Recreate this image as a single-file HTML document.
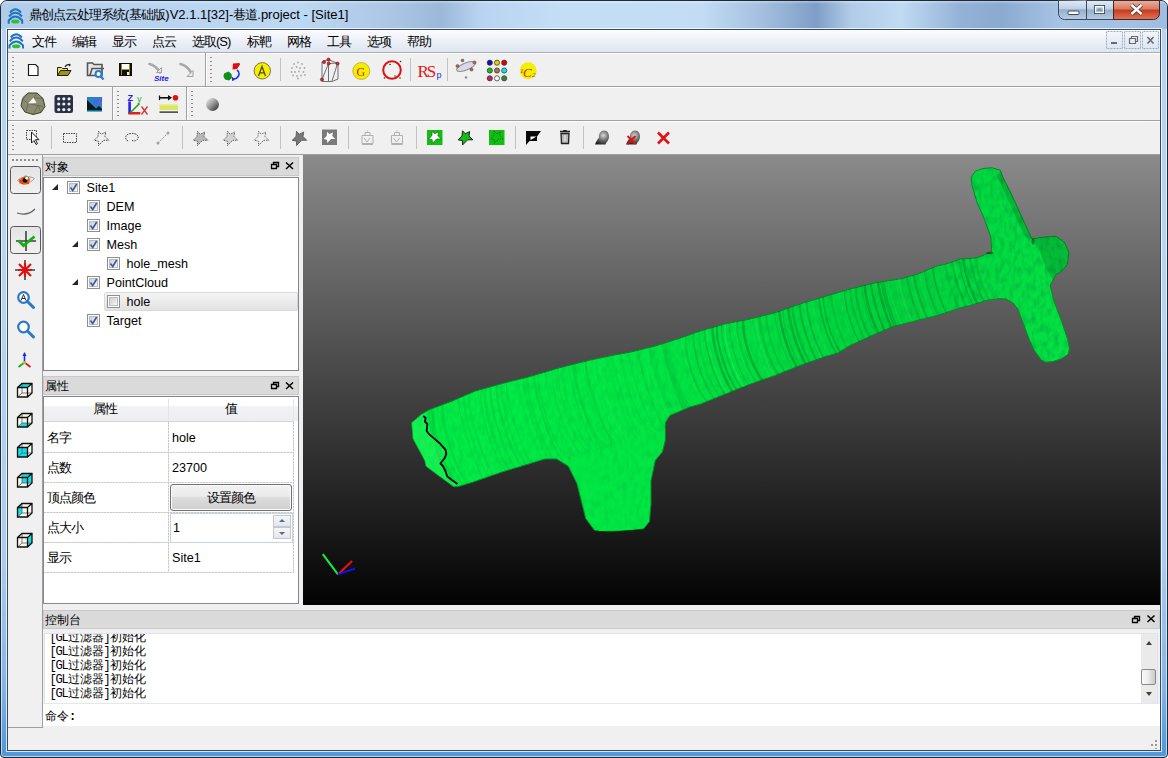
<!DOCTYPE html>
<html><head><meta charset="utf-8">
<style>
*{margin:0;padding:0;box-sizing:border-box}
html,body{width:1168px;height:758px;overflow:hidden}
body{position:relative;font-family:"Liberation Sans",sans-serif;font-size:12px;color:#000;background:#fff}
.a{position:absolute}
#frame{left:0;top:0;width:1168px;height:758px;border:1px solid #1c2a3a;border-radius:7px 7px 4px 4px;box-shadow:inset 0 0 0 1px rgba(255,255,255,.6);
 background:linear-gradient(180deg,#a9c8e8 0px,#b6d3f0 28px,#b9d5f0 250px,#acccec 560px,#80b4e4 690px,#5a9cdc 740px,#5096d8 758px);}
#frame:after{content:"";position:absolute;left:0;top:0;right:0;height:28px;border-radius:7px 7px 0 0;background:linear-gradient(180deg,rgba(255,255,255,.35) 0,rgba(255,255,255,0) 3px,rgba(255,255,255,0) 100%),linear-gradient(90deg,#b0cce8 0px,#b8d4f0 150px,#bcd8f2 300px,#a8c4e2 400px,#9cb8d8 440px,#b8d4f0 480px,#c4def6 560px,#c2dcf4 700px,#a4c0de 760px,#7e9ec6 815px,#b0cce8 850px,#c0daf2 900px,#94b2d6 960px,#8aaad0 1000px,#a8c4e4 1060px,#a0bce0 1168px)}
#client{left:7px;top:29px;width:1154px;height:722px;border:1px solid #3a4a5e;background:#f0f0f0;z-index:1;box-shadow:0 0 0 1px rgba(255,255,255,.75)}
.title{left:29px;top:6px;font-size:13px;color:#000;white-space:nowrap;z-index:2}
.cap{top:1px;height:19px;border:1px solid #4a5a6a;z-index:2}
#menubar{left:8px;top:30px;width:1152px;height:23px;background:linear-gradient(180deg,#fbfcfe 0%,#eef1f8 45%,#dfe5f0 100%);border-bottom:1px solid #a8aeb8;z-index:2}
.mi{top:33px;font-size:13px;letter-spacing:-1px;font-weight:500;z-index:3;white-space:nowrap}
.hl{height:1px;background:#a0a0a0;z-index:2}
.hlw{height:1px;background:#fff;z-index:2}
.vl{width:1px;background:#a0a0a0;z-index:2}
.vlw{width:1px;background:#fff;z-index:2}
.grip{width:2px;z-index:3;background:repeating-linear-gradient(180deg,#8a8a8a 0 1px,transparent 1px 4px)}
.grph{height:2px;z-index:3;background:repeating-linear-gradient(90deg,#8a8a8a 0 2px,transparent 2px 5px)}
.ic{z-index:4;overflow:visible}
.panelt{height:19px;background:#dadada;border:1px solid #c8c8c8;z-index:3}
.pt{font-size:12px;font-weight:500;z-index:4;white-space:nowrap}
.white{background:#fff;z-index:3}
.tx{z-index:5;white-space:nowrap;font-size:12.6px}
.cb{width:13px;height:13px;border:1px solid #8f8f8f;background:linear-gradient(135deg,#dcdcdc,#fafafa);z-index:5}
.tri{width:0;height:0;z-index:5;border-style:solid}
#vp{left:303px;top:155px;width:857px;height:450px;background:linear-gradient(180deg,#8a8a8a 0%,#030303 100%);z-index:3;overflow:hidden}
.c12{letter-spacing:-1px;font-weight:500}
.cj{font-size:13px;letter-spacing:-1px;line-height:14px;font-weight:500}
.ln{height:14px;line-height:14px;white-space:nowrap;font-size:12px;font-weight:500;font-family:"Liberation Sans",sans-serif}
.m{font-family:"Liberation Mono",monospace;font-size:12px;letter-spacing:-1.2px}
.cjm{font-size:12px;font-weight:500}
.log{left:51px;font-size:12px;z-index:6;white-space:nowrap;line-height:14px}
</style></head><body>
<div id="frame" class="a"></div>
<div class="a title"><span class="c12">鼎创点云处理系统</span>(<span class="c12">基础版</span>)V2.1.1[32]-<span class="c12">巷道</span>.project - [Site1]</div>
<div id="client" class="a"></div>
<div id="menubar" class="a"></div>
<div class="a mi" style="left:32px">文件</div>
<div class="a mi" style="left:72px">编辑</div>
<div class="a mi" style="left:112px">显示</div>
<div class="a mi" style="left:152px">点云</div>
<div class="a mi" style="left:192px">选取(S)</div>
<div class="a mi" style="left:247px">标靶</div>
<div class="a mi" style="left:287px">网格</div>
<div class="a mi" style="left:327px">工具</div>
<div class="a mi" style="left:367px">选项</div>
<div class="a mi" style="left:407px">帮助</div>

<!-- toolbar row lines -->
<div class="a hlw" style="left:8px;top:53px;width:1152px"></div>
<div class="a hl" style="left:8px;top:86px;width:1152px"></div>
<div class="a hlw" style="left:8px;top:87px;width:1152px"></div>
<div class="a hl" style="left:8px;top:120px;width:1152px"></div>
<div class="a hlw" style="left:8px;top:121px;width:1152px"></div>
<div class="a hl" style="left:8px;top:154px;width:1152px"></div>

<!-- viewport -->
<div id="vp" class="a"></div>


<svg class="a" style="left:303px;top:155px;z-index:4" width="857" height="450" viewBox="303 155 857 450">
<defs>
<linearGradient id="tg" gradientUnits="userSpaceOnUse" x1="420" y1="0" x2="1070" y2="0"><stop offset="0" stop-color="#02ec46"/><stop offset=".35" stop-color="#00e644"/><stop offset=".75" stop-color="#00d03c"/><stop offset=".85" stop-color="#00d840"/><stop offset="1" stop-color="#04e244"/></linearGradient>
<pattern id="stripes" width="97" height="20" patternUnits="userSpaceOnUse" patternTransform="rotate(-17)"><rect x="0" y="0" width="2" height="20" fill="#003a10" opacity="0.10"/><rect x="8" y="0" width="3" height="20" fill="#003a10" opacity="0.10"/><rect x="13" y="0" width="3" height="20" fill="#003a10" opacity="0.07"/><rect x="21" y="0" width="4" height="20" fill="#003a10" opacity="0.12"/><rect x="28" y="0" width="2" height="20" fill="#80ffa0" opacity="0.10"/><rect x="36" y="0" width="3" height="20" fill="#003a10" opacity="0.11"/><rect x="41" y="0" width="2" height="20" fill="#003a10" opacity="0.11"/><rect x="47" y="0" width="1" height="20" fill="#003a10" opacity="0.12"/><rect x="54" y="0" width="3" height="20" fill="#80ffa0" opacity="0.11"/><rect x="62" y="0" width="4" height="20" fill="#80ffa0" opacity="0.09"/><rect x="70" y="0" width="1" height="20" fill="#003a10" opacity="0.05"/><rect x="75" y="0" width="3" height="20" fill="#80ffa0" opacity="0.11"/><rect x="83" y="0" width="4" height="20" fill="#003a10" opacity="0.12"/></pattern>
<filter id="mottle" x="0" y="0" width="100%" height="100%">
<feTurbulence type="fractalNoise" baseFrequency="0.22 0.12" numOctaves="2" seed="7" result="n"/>
<feColorMatrix in="n" type="matrix" values="0 0 0 0 0  0 0 0 0 0.12  0 0 0 0 0.03  0 0 0 -0.6 0.36" result="c"/>
<feComposite in="c" in2="SourceGraphic" operator="in"/>
</filter>
</defs>
<polygon points="411.6,422.8 421.8,414.1 429,409.8 452.2,401 475.4,391 501.5,383.7 530.5,376.4 559.6,367.7 588.6,360.5 608.9,356.1 632,351.8 655.3,346 678.5,338.7 700,331 725,324 750,319 775,312.7 800,304 825,296.4 850,289 875.5,282.7 900.6,278.9 918,274 935.7,266.4 950.8,262.6 960,259 977,257.8 991.7,251.8 990.9,237.2 984,218.3 977.2,202.9 972,185.7 971.1,177.2 975.4,171.1 983,168.5 991.7,167.7 1000.3,170.3 1002.9,177.2 1011.5,194.3 1021.7,216.6 1030.3,235.5 1032,238.9 1042.3,237.2 1056,236.3 1064.6,242.3 1068.9,252.6 1067.4,264.4 1061.6,271.6 1055.8,274.5 1052.9,280.3 1050,285.4 1054.3,302.1 1061.6,321 1067.4,338.4 1069.6,348.5 1068.1,354.3 1061.6,358.7 1052.9,361.6 1045.6,362.3 1041.3,360.1 1034,350 1028.2,336.9 1022.4,321 1018,309.3 1013.7,303.5 1006.4,299.2 999.2,298.5 986.1,300.6 971.6,305 960,307.9 938,315.3 913,321.5 893,326.5 875.5,334 850.4,345.3 838,352.9 825.4,356.6 800.3,365.4 775.2,375.4 750,384.2 725,394.2 700,404.3 690,406.9 669.8,415.6 665.4,422.8 665.4,440.2 662.5,451.8 655.3,460.5 651,480.9 651,504 649.5,521.5 643.7,528.7 632,530.8 600,531.6 594.4,530.2 585.7,518.6 581.3,501 577,483.8 568.3,466.3 556.7,459 545,459 530.5,463.4 501.5,472.2 472.5,482.3 458,486.7 453.7,486.7 437.7,475 426,466.3 424.7,460.5 413,438.8" fill="url(#tg)" stroke="#0a8a26" stroke-width="1" stroke-linejoin="round"/>
<clipPath id="tclip"><polygon points="411.6,422.8 421.8,414.1 429,409.8 452.2,401 475.4,391 501.5,383.7 530.5,376.4 559.6,367.7 588.6,360.5 608.9,356.1 632,351.8 655.3,346 678.5,338.7 700,331 725,324 750,319 775,312.7 800,304 825,296.4 850,289 875.5,282.7 900.6,278.9 918,274 935.7,266.4 950.8,262.6 960,259 977,257.8 991.7,251.8 990.9,237.2 984,218.3 977.2,202.9 972,185.7 971.1,177.2 975.4,171.1 983,168.5 991.7,167.7 1000.3,170.3 1002.9,177.2 1011.5,194.3 1021.7,216.6 1030.3,235.5 1032,238.9 1042.3,237.2 1056,236.3 1064.6,242.3 1068.9,252.6 1067.4,264.4 1061.6,271.6 1055.8,274.5 1052.9,280.3 1050,285.4 1054.3,302.1 1061.6,321 1067.4,338.4 1069.6,348.5 1068.1,354.3 1061.6,358.7 1052.9,361.6 1045.6,362.3 1041.3,360.1 1034,350 1028.2,336.9 1022.4,321 1018,309.3 1013.7,303.5 1006.4,299.2 999.2,298.5 986.1,300.6 971.6,305 960,307.9 938,315.3 913,321.5 893,326.5 875.5,334 850.4,345.3 838,352.9 825.4,356.6 800.3,365.4 775.2,375.4 750,384.2 725,394.2 700,404.3 690,406.9 669.8,415.6 665.4,422.8 665.4,440.2 662.5,451.8 655.3,460.5 651,480.9 651,504 649.5,521.5 643.7,528.7 632,530.8 600,531.6 594.4,530.2 585.7,518.6 581.3,501 577,483.8 568.3,466.3 556.7,459 545,459 530.5,463.4 501.5,472.2 472.5,482.3 458,486.7 453.7,486.7 437.7,475 426,466.3 424.7,460.5 413,438.8"/></clipPath>
<g clip-path="url(#tclip)" fill="none"><path d="M430.6 401.5A8.7 48.0 -17.5 0 0 459.4 493.0" stroke="#003a10" stroke-width="2.5" opacity="0.10"/><path d="M435.4 400.0A11.1 48.0 -17.5 0 0 464.2 491.5" stroke="#003a10" stroke-width="2.5" opacity="0.10"/><path d="M440.9 398.2A10.8 48.0 -17.5 0 0 469.8 489.8" stroke="#003a10" stroke-width="1" opacity="0.07"/><path d="M446.0 396.6A11.3 48.0 -17.5 0 0 474.9 488.2" stroke="#003a10" stroke-width="2.5" opacity="0.08"/><path d="M452.9 394.4A9.9 48.0 -17.5 0 0 481.8 486.0" stroke="#003a10" stroke-width="1" opacity="0.06"/><path d="M459.2 392.4A6.4 48.0 -17.5 0 0 488.1 484.0" stroke="#003a10" stroke-width="1" opacity="0.10"/><path d="M465.3 390.5A8.0 48.0 -17.5 0 0 494.2 482.1" stroke="#003a10" stroke-width="1.5" opacity="0.06"/><path d="M470.9 388.8A9.0 48.0 -17.5 0 0 499.8 480.3" stroke="#003a10" stroke-width="2" opacity="0.07"/><path d="M475.5 387.3A9.3 48.0 -17.5 0 0 504.4 478.9" stroke="#70ff90" stroke-width="2" opacity="0.04"/><path d="M479.8 386.0A7.4 48.0 -17.5 0 0 508.7 477.5" stroke="#003a10" stroke-width="1" opacity="0.05"/><path d="M484.4 384.5A11.1 48.0 -17.5 0 0 513.3 476.1" stroke="#003a10" stroke-width="1" opacity="0.10"/><path d="M488.3 383.3A11.6 48.0 -17.5 0 0 517.1 474.8" stroke="#003a10" stroke-width="2.5" opacity="0.07"/><path d="M492.9 381.8A9.4 48.0 -17.5 0 0 521.8 473.4" stroke="#003a10" stroke-width="2" opacity="0.09"/><path d="M496.3 380.8A8.0 48.0 -17.5 0 0 525.1 472.3" stroke="#70ff90" stroke-width="1" opacity="0.07"/><path d="M499.8 379.6A10.2 48.0 -17.5 0 0 528.7 471.2" stroke="#003a10" stroke-width="2.5" opacity="0.08"/><path d="M503.5 378.5A9.4 48.0 -17.5 0 0 532.4 470.0" stroke="#003a10" stroke-width="1.5" opacity="0.06"/><path d="M508.2 377.0A8.3 48.0 -17.5 0 0 537.1 468.5" stroke="#003a10" stroke-width="1" opacity="0.11"/><path d="M512.3 375.7A11.8 48.0 -17.5 0 0 541.2 467.3" stroke="#70ff90" stroke-width="1" opacity="0.04"/><path d="M516.1 374.5A8.4 48.0 -17.5 0 0 545.0 466.0" stroke="#70ff90" stroke-width="1" opacity="0.06"/><path d="M519.3 373.5A6.9 48.0 -17.5 0 0 548.2 465.1" stroke="#003a10" stroke-width="2" opacity="0.04"/><path d="M525.6 371.5A8.3 48.0 -17.5 0 0 554.5 463.1" stroke="#003a10" stroke-width="1.5" opacity="0.06"/><path d="M528.7 370.5A8.2 48.0 -17.5 0 0 557.5 462.1" stroke="#003a10" stroke-width="2.5" opacity="0.06"/><path d="M535.0 368.5A6.8 48.0 -17.5 0 0 563.9 460.1" stroke="#003a10" stroke-width="2" opacity="0.09"/><path d="M541.6 366.4A10.9 48.0 -17.5 0 0 570.5 458.0" stroke="#003a10" stroke-width="1.5" opacity="0.06"/><path d="M547.4 364.6A8.3 48.0 -17.5 0 0 576.3 456.2" stroke="#003a10" stroke-width="1" opacity="0.05"/><path d="M550.8 363.6A6.2 48.0 -17.5 0 0 579.7 455.1" stroke="#70ff90" stroke-width="2.5" opacity="0.04"/><path d="M554.8 362.3A10.9 48.0 -17.5 0 0 583.7 453.8" stroke="#003a10" stroke-width="1.5" opacity="0.07"/><path d="M561.5 360.2A11.9 48.0 -17.5 0 0 590.4 451.7" stroke="#003a10" stroke-width="1" opacity="0.08"/><path d="M565.7 358.9A11.5 48.0 -17.5 0 0 594.5 450.4" stroke="#003a10" stroke-width="2" opacity="0.04"/><path d="M570.3 357.4A7.5 48.0 -17.5 0 0 599.2 449.0" stroke="#003a10" stroke-width="1.5" opacity="0.06"/><path d="M573.7 356.3A6.8 48.0 -17.5 0 0 602.6 447.9" stroke="#003a10" stroke-width="1.5" opacity="0.07"/><path d="M579.0 354.6A11.5 48.0 -17.5 0 0 607.9 446.2" stroke="#003a10" stroke-width="2" opacity="0.07"/><path d="M585.9 352.5A6.1 48.0 -17.5 0 0 614.8 444.0" stroke="#003a10" stroke-width="2" opacity="0.08"/><path d="M590.2 351.1A12.0 48.0 -17.5 0 0 619.0 442.7" stroke="#003a10" stroke-width="1" opacity="0.08"/><path d="M596.8 349.0A10.4 48.0 -17.5 0 0 625.6 440.6" stroke="#70ff90" stroke-width="2" opacity="0.07"/><path d="M601.2 347.7A10.1 48.0 -17.5 0 0 630.0 439.2" stroke="#70ff90" stroke-width="2.5" opacity="0.07"/><path d="M608.0 345.5A6.2 48.0 -17.5 0 0 636.8 437.1" stroke="#003a10" stroke-width="2.5" opacity="0.04"/><path d="M612.5 344.1A6.1 48.0 -17.5 0 0 641.3 435.7" stroke="#003a10" stroke-width="1" opacity="0.05"/><path d="M619.4 341.9A11.3 48.0 -17.5 0 0 648.3 433.5" stroke="#70ff90" stroke-width="2.5" opacity="0.05"/><path d="M624.2 340.4A11.0 48.0 -17.5 0 0 653.1 431.9" stroke="#003a10" stroke-width="1" opacity="0.09"/><path d="M628.4 339.1A6.5 48.0 -17.5 0 0 657.3 430.6" stroke="#003a10" stroke-width="1" opacity="0.10"/><path d="M633.4 337.5A9.7 48.0 -17.5 0 0 662.3 429.0" stroke="#70ff90" stroke-width="1" opacity="0.04"/><path d="M637.9 336.1A6.9 48.0 -17.5 0 0 666.8 427.6" stroke="#003a10" stroke-width="2" opacity="0.08"/><path d="M643.6 334.3A8.7 48.0 -17.5 0 0 672.4 425.8" stroke="#70ff90" stroke-width="2" opacity="0.05"/><path d="M647.3 333.1A8.6 48.0 -17.5 0 0 676.2 424.6" stroke="#70ff90" stroke-width="1.5" opacity="0.07"/><path d="M651.9 331.7A9.5 48.0 -17.5 0 0 680.7 423.2" stroke="#003a10" stroke-width="2.5" opacity="0.06"/><path d="M656.3 330.3A11.4 48.0 -17.5 0 0 685.2 421.8" stroke="#003a10" stroke-width="2" opacity="0.05"/><path d="M662.6 328.3A6.7 48.0 -17.5 0 0 691.4 419.8" stroke="#003a10" stroke-width="2.5" opacity="0.10"/><path d="M667.1 326.9A9.1 48.0 -17.5 0 0 696.0 418.4" stroke="#003a10" stroke-width="2.5" opacity="0.09"/><path d="M671.4 325.5A11.0 48.0 -17.5 0 0 700.3 417.1" stroke="#003a10" stroke-width="2" opacity="0.08"/><path d="M676.7 323.8A7.9 48.0 -17.5 0 0 705.5 415.4" stroke="#70ff90" stroke-width="1.5" opacity="0.03"/><path d="M681.3 322.4A7.1 48.0 -17.5 0 0 710.2 413.9" stroke="#70ff90" stroke-width="1.5" opacity="0.08"/><path d="M689.9 328.1A11.9 40.0 -17.5 0 0 713.9 404.4" stroke="#003a10" stroke-width="2" opacity="0.12"/><path d="M696.7 325.9A10.1 40.0 -17.5 0 0 720.8 402.2" stroke="#003a10" stroke-width="1.5" opacity="0.18"/><path d="M702.6 324.1A10.5 40.0 -17.5 0 0 726.6 400.4" stroke="#003a10" stroke-width="1.5" opacity="0.11"/><path d="M706.7 322.8A8.1 40.0 -17.5 0 0 730.7 399.1" stroke="#003a10" stroke-width="1.5" opacity="0.19"/><path d="M711.2 321.3A10.8 40.0 -17.5 0 0 735.3 397.6" stroke="#70ff90" stroke-width="2.5" opacity="0.09"/><path d="M714.8 320.2A8.7 40.0 -17.5 0 0 738.8 396.5" stroke="#003a10" stroke-width="2.5" opacity="0.25"/><path d="M720.0 318.6A9.9 40.0 -17.5 0 0 744.0 394.9" stroke="#003a10" stroke-width="2" opacity="0.23"/><path d="M724.8 317.0A9.9 40.0 -17.5 0 0 748.9 393.3" stroke="#003a10" stroke-width="1" opacity="0.22"/><path d="M728.7 315.8A11.4 40.0 -17.5 0 0 752.7 392.1" stroke="#70ff90" stroke-width="2" opacity="0.18"/><path d="M732.7 314.5A10.3 40.0 -17.5 0 0 756.8 390.8" stroke="#003a10" stroke-width="1" opacity="0.18"/><path d="M737.5 313.0A9.3 40.0 -17.5 0 0 761.5 389.3" stroke="#70ff90" stroke-width="1" opacity="0.13"/><path d="M741.3 311.8A11.2 40.0 -17.5 0 0 765.4 388.1" stroke="#003a10" stroke-width="2" opacity="0.11"/><path d="M747.1 310.0A11.5 40.0 -17.5 0 0 771.1 386.3" stroke="#003a10" stroke-width="2.5" opacity="0.26"/><path d="M753.9 307.9A9.0 40.0 -17.5 0 0 777.9 384.2" stroke="#70ff90" stroke-width="1.5" opacity="0.09"/><path d="M758.6 306.4A9.4 40.0 -17.5 0 0 782.7 382.7" stroke="#70ff90" stroke-width="1.5" opacity="0.14"/><path d="M763.7 304.8A11.1 40.0 -17.5 0 0 787.8 381.1" stroke="#003a10" stroke-width="2.5" opacity="0.15"/><path d="M770.5 302.6A11.2 40.0 -17.5 0 0 794.6 378.9" stroke="#003a10" stroke-width="1.5" opacity="0.15"/><path d="M777.4 300.4A9.1 40.0 -17.5 0 0 801.5 376.7" stroke="#003a10" stroke-width="1" opacity="0.14"/><path d="M782.4 298.9A9.6 40.0 -17.5 0 0 806.5 375.2" stroke="#003a10" stroke-width="2.5" opacity="0.26"/><path d="M787.6 297.2A11.9 40.0 -17.5 0 0 811.7 373.5" stroke="#003a10" stroke-width="1.5" opacity="0.12"/><path d="M790.9 296.2A9.2 40.0 -17.5 0 0 814.9 372.5" stroke="#003a10" stroke-width="2.5" opacity="0.25"/><path d="M794.9 294.9A8.8 40.0 -17.5 0 0 819.0 371.2" stroke="#003a10" stroke-width="2.5" opacity="0.17"/><path d="M800.0 293.3A6.7 40.0 -17.5 0 0 824.1 369.6" stroke="#003a10" stroke-width="2" opacity="0.11"/><path d="M803.6 292.2A10.7 40.0 -17.5 0 0 827.6 368.5" stroke="#003a10" stroke-width="1.5" opacity="0.13"/><path d="M806.6 291.2A7.7 40.0 -17.5 0 0 830.7 367.5" stroke="#70ff90" stroke-width="2.5" opacity="0.10"/><path d="M810.0 290.1A10.4 40.0 -17.5 0 0 834.1 366.4" stroke="#003a10" stroke-width="2" opacity="0.18"/><path d="M815.9 288.3A10.2 40.0 -17.5 0 0 840.0 364.6" stroke="#70ff90" stroke-width="2.5" opacity="0.08"/><path d="M822.2 286.3A9.7 40.0 -17.5 0 0 846.3 362.6" stroke="#003a10" stroke-width="1.5" opacity="0.24"/><path d="M827.3 284.7A11.1 40.0 -17.5 0 0 851.4 361.0" stroke="#003a10" stroke-width="1.5" opacity="0.24"/><path d="M834.0 282.6A9.8 40.0 -17.5 0 0 858.0 358.9" stroke="#003a10" stroke-width="2" opacity="0.13"/><path d="M840.5 280.5A7.2 40.0 -17.5 0 0 864.6 356.8" stroke="#70ff90" stroke-width="1" opacity="0.10"/><path d="M844.1 279.4A7.4 40.0 -17.5 0 0 868.1 355.7" stroke="#70ff90" stroke-width="1" opacity="0.10"/><path d="M848.8 277.9A11.6 40.0 -17.5 0 0 872.9 354.2" stroke="#003a10" stroke-width="1.5" opacity="0.21"/><path d="M853.4 276.5A10.1 40.0 -17.5 0 0 877.5 352.8" stroke="#003a10" stroke-width="2" opacity="0.14"/><path d="M860.1 274.4A11.8 40.0 -17.5 0 0 884.1 350.7" stroke="#003a10" stroke-width="2" opacity="0.18"/><path d="M865.1 272.8A10.1 40.0 -17.5 0 0 889.1 349.1" stroke="#003a10" stroke-width="1" opacity="0.12"/><path d="M868.2 271.8A10.6 40.0 -17.5 0 0 892.2 348.1" stroke="#003a10" stroke-width="2.5" opacity="0.25"/><path d="M871.8 270.7A7.1 40.0 -17.5 0 0 895.8 347.0" stroke="#003a10" stroke-width="2" opacity="0.24"/><path d="M878.5 268.6A6.6 40.0 -17.5 0 0 902.5 344.9" stroke="#003a10" stroke-width="2.5" opacity="0.25"/><path d="M881.8 267.5A6.6 40.0 -17.5 0 0 905.8 343.8" stroke="#003a10" stroke-width="2" opacity="0.17"/><path d="M886.5 266.0A9.6 40.0 -17.5 0 0 910.6 342.3" stroke="#003a10" stroke-width="1.5" opacity="0.21"/><path d="M890.2 264.8A8.7 40.0 -17.5 0 0 914.3 341.1" stroke="#70ff90" stroke-width="1.5" opacity="0.12"/><path d="M895.7 263.1A6.6 40.0 -17.5 0 0 919.7 339.4" stroke="#70ff90" stroke-width="1" opacity="0.11"/><path d="M901.9 261.2A10.2 40.0 -17.5 0 0 925.9 337.5" stroke="#70ff90" stroke-width="2.5" opacity="0.14"/><path d="M907.1 259.5A7.1 40.0 -17.5 0 0 931.2 335.8" stroke="#003a10" stroke-width="2" opacity="0.16"/><path d="M911.3 258.2A6.7 40.0 -17.5 0 0 935.3 334.5" stroke="#70ff90" stroke-width="2.5" opacity="0.09"/><path d="M914.8 257.1A8.0 40.0 -17.5 0 0 938.8 333.4" stroke="#003a10" stroke-width="2.5" opacity="0.16"/><path d="M920.8 255.2A8.4 40.0 -17.5 0 0 944.9 331.5" stroke="#70ff90" stroke-width="2" opacity="0.09"/><path d="M925.1 253.9A6.6 40.0 -17.5 0 0 949.1 330.2" stroke="#70ff90" stroke-width="1" opacity="0.18"/><path d="M929.0 252.6A11.7 40.0 -17.5 0 0 953.0 328.9" stroke="#003a10" stroke-width="2.5" opacity="0.16"/><path d="M934.3 251.0A9.2 40.0 -17.5 0 0 958.3 327.2" stroke="#003a10" stroke-width="1.5" opacity="0.26"/><path d="M940.1 249.1A10.6 40.0 -17.5 0 0 964.1 325.4" stroke="#70ff90" stroke-width="1" opacity="0.08"/><path d="M946.0 247.2A7.5 40.0 -17.5 0 0 970.1 323.5" stroke="#003a10" stroke-width="1.5" opacity="0.11"/><path d="M951.6 245.5A6.1 40.0 -17.5 0 0 975.7 321.8" stroke="#003a10" stroke-width="2" opacity="0.15"/><path d="M956.8 243.8A9.0 40.0 -17.5 0 0 980.9 320.1" stroke="#70ff90" stroke-width="1" opacity="0.14"/><path d="M962.4 242.1A10.9 40.0 -17.5 0 0 986.4 318.4" stroke="#003a10" stroke-width="1" opacity="0.20"/><path d="M966.9 240.7A11.6 40.0 -17.5 0 0 991.0 316.9" stroke="#003a10" stroke-width="2.5" opacity="0.26"/><path d="M972.1 239.0A9.6 40.0 -17.5 0 0 996.1 315.3" stroke="#003a10" stroke-width="2" opacity="0.18"/><path d="M977.2 237.4A9.6 40.0 -17.5 0 0 1001.2 313.7" stroke="#003a10" stroke-width="2" opacity="0.15"/><path d="M982.4 235.8A7.7 40.0 -17.5 0 0 1006.5 312.1" stroke="#70ff90" stroke-width="1" opacity="0.11"/></g>
<clipPath id="crossclip"><rect x="945" y="155" width="215" height="450"/></clipPath>
<clipPath id="mainclip"><rect x="303" y="155" width="642" height="450"/></clipPath>
<g clip-path="url(#crossclip)"><polygon points="411.6,422.8 421.8,414.1 429,409.8 452.2,401 475.4,391 501.5,383.7 530.5,376.4 559.6,367.7 588.6,360.5 608.9,356.1 632,351.8 655.3,346 678.5,338.7 700,331 725,324 750,319 775,312.7 800,304 825,296.4 850,289 875.5,282.7 900.6,278.9 918,274 935.7,266.4 950.8,262.6 960,259 977,257.8 991.7,251.8 990.9,237.2 984,218.3 977.2,202.9 972,185.7 971.1,177.2 975.4,171.1 983,168.5 991.7,167.7 1000.3,170.3 1002.9,177.2 1011.5,194.3 1021.7,216.6 1030.3,235.5 1032,238.9 1042.3,237.2 1056,236.3 1064.6,242.3 1068.9,252.6 1067.4,264.4 1061.6,271.6 1055.8,274.5 1052.9,280.3 1050,285.4 1054.3,302.1 1061.6,321 1067.4,338.4 1069.6,348.5 1068.1,354.3 1061.6,358.7 1052.9,361.6 1045.6,362.3 1041.3,360.1 1034,350 1028.2,336.9 1022.4,321 1018,309.3 1013.7,303.5 1006.4,299.2 999.2,298.5 986.1,300.6 971.6,305 960,307.9 938,315.3 913,321.5 893,326.5 875.5,334 850.4,345.3 838,352.9 825.4,356.6 800.3,365.4 775.2,375.4 750,384.2 725,394.2 700,404.3 690,406.9 669.8,415.6 665.4,422.8 665.4,440.2 662.5,451.8 655.3,460.5 651,480.9 651,504 649.5,521.5 643.7,528.7 632,530.8 600,531.6 594.4,530.2 585.7,518.6 581.3,501 577,483.8 568.3,466.3 556.7,459 545,459 530.5,463.4 501.5,472.2 472.5,482.3 458,486.7 453.7,486.7 437.7,475 426,466.3 424.7,460.5 413,438.8" fill="#000" filter="url(#mottle)"/></g>
<g clip-path="url(#mainclip)" opacity=".45"><polygon points="411.6,422.8 421.8,414.1 429,409.8 452.2,401 475.4,391 501.5,383.7 530.5,376.4 559.6,367.7 588.6,360.5 608.9,356.1 632,351.8 655.3,346 678.5,338.7 700,331 725,324 750,319 775,312.7 800,304 825,296.4 850,289 875.5,282.7 900.6,278.9 918,274 935.7,266.4 950.8,262.6 960,259 977,257.8 991.7,251.8 990.9,237.2 984,218.3 977.2,202.9 972,185.7 971.1,177.2 975.4,171.1 983,168.5 991.7,167.7 1000.3,170.3 1002.9,177.2 1011.5,194.3 1021.7,216.6 1030.3,235.5 1032,238.9 1042.3,237.2 1056,236.3 1064.6,242.3 1068.9,252.6 1067.4,264.4 1061.6,271.6 1055.8,274.5 1052.9,280.3 1050,285.4 1054.3,302.1 1061.6,321 1067.4,338.4 1069.6,348.5 1068.1,354.3 1061.6,358.7 1052.9,361.6 1045.6,362.3 1041.3,360.1 1034,350 1028.2,336.9 1022.4,321 1018,309.3 1013.7,303.5 1006.4,299.2 999.2,298.5 986.1,300.6 971.6,305 960,307.9 938,315.3 913,321.5 893,326.5 875.5,334 850.4,345.3 838,352.9 825.4,356.6 800.3,365.4 775.2,375.4 750,384.2 725,394.2 700,404.3 690,406.9 669.8,415.6 665.4,422.8 665.4,440.2 662.5,451.8 655.3,460.5 651,480.9 651,504 649.5,521.5 643.7,528.7 632,530.8 600,531.6 594.4,530.2 585.7,518.6 581.3,501 577,483.8 568.3,466.3 556.7,459 545,459 530.5,463.4 501.5,472.2 472.5,482.3 458,486.7 453.7,486.7 437.7,475 426,466.3 424.7,460.5 413,438.8" fill="#000" filter="url(#mottle)"/></g>
<polygon points="1032,239 1042,237 1056,236 1064.6,242.3 1068.9,252.6 1067.4,264.4 1061.6,271.6 1055.8,274.5 1052.9,280.3 1046,268 1040,252" fill="#003a10" opacity=".22"/>
<polygon points="1000.3,170.3 1002.9,177.2 1011.5,194.3 1021.7,216.6 1030.3,235.5 1032,238.9 1025,237 1015,215 1005,193 997,176" fill="#003a10" opacity=".22"/>
<ellipse cx="990" cy="253" rx="3.5" ry="1.3" fill="#002a08" opacity=".5"/>
<ellipse cx="1033" cy="241.5" rx="1.5" ry="3" fill="#002a08" opacity=".5"/>
<polygon points="411.6,422.8 421.8,414.1 424.7,415.6 427.6,422.8 429,431.5 437.7,440.2 445,449 443.5,457.6 440.6,463.4 446.4,472.2 450.8,478 458,485.2 453.7,486.7 437.7,475 426,466.3 424.7,460.5 413,438.8" fill="#40ff70" opacity=".3"/>
<path d="M423.2 416L425.7 418 424.9 421.5 427.4 424 426.6 430.9 429.2 434.3 434.3 438.6 440.3 443.8 445.5 449.8 446.3 454 444.6 458.3 440.3 463.5 442.9 466 445.5 471.2 447.2 476.3 451.5 479.8 457.5 484" fill="none" stroke="#000" stroke-width="1.8" stroke-linejoin="bevel"/>
<path d="M596 531.5L612 532.5 628 531 641 530" fill="none" stroke="#082808" stroke-width="1.5"/>
<g stroke="#000" stroke-width="2" fill="none">
<path d="M337.9 574.4L322.8 554.2" stroke="#10f040"/>
<path d="M337.9 574.4L352.1 561" stroke="#f01010"/>
<path d="M337.9 574.4L355.1 568.5" stroke="#1010f0"/>
</g>
</svg>

<!-- object panel -->
<div class="a panelt" style="left:43px;top:157px;width:256px"></div>
<div class="a pt" style="left:45px;top:159px">对象</div>
<div class="a white" style="left:43px;top:177px;width:256px;height:194px;border:1px solid #828790"></div>


<!-- tree content -->
<div class="a" style="left:104px;top:292px;width:194px;height:19px;border:1px solid #d9d9d9;border-radius:2px;background:linear-gradient(180deg,#f4f4f4,#e2e2e2);z-index:4"></div>
<div class="a" style="left:52px;top:184px;z-index:5;width:0;height:0;border-left:6px solid transparent;border-bottom:6px solid #262626"></div>
<div class="a" style="left:67px;top:181px;width:13px;height:13px;border:1px solid #8e8f8f;background:#fff;z-index:5"><div style="position:absolute;left:1px;top:1px;width:9px;height:9px;background:linear-gradient(135deg,#cbcfd5,#f6f6f6);border:1px solid #b8bcc2"></div><svg width="11" height="11" style="position:absolute;left:0;top:0"><path d="M2.5 5.5l2.2 3 4-6.5" fill="none" stroke="#3b5a9c" stroke-width="1.6"/></svg></div>
<div class="a tx" style="left:86.5px;top:180.5px;line-height:14px">Site1</div>
<div class="a" style="left:87px;top:200px;width:13px;height:13px;border:1px solid #8e8f8f;background:#fff;z-index:5"><div style="position:absolute;left:1px;top:1px;width:9px;height:9px;background:linear-gradient(135deg,#cbcfd5,#f6f6f6);border:1px solid #b8bcc2"></div><svg width="11" height="11" style="position:absolute;left:0;top:0"><path d="M2.5 5.5l2.2 3 4-6.5" fill="none" stroke="#3b5a9c" stroke-width="1.6"/></svg></div>
<div class="a tx" style="left:106.5px;top:199.5px;line-height:14px">DEM</div>
<div class="a" style="left:87px;top:219px;width:13px;height:13px;border:1px solid #8e8f8f;background:#fff;z-index:5"><div style="position:absolute;left:1px;top:1px;width:9px;height:9px;background:linear-gradient(135deg,#cbcfd5,#f6f6f6);border:1px solid #b8bcc2"></div><svg width="11" height="11" style="position:absolute;left:0;top:0"><path d="M2.5 5.5l2.2 3 4-6.5" fill="none" stroke="#3b5a9c" stroke-width="1.6"/></svg></div>
<div class="a tx" style="left:106.5px;top:218.5px;line-height:14px">Image</div>
<div class="a" style="left:72px;top:241px;z-index:5;width:0;height:0;border-left:6px solid transparent;border-bottom:6px solid #262626"></div>
<div class="a" style="left:87px;top:238px;width:13px;height:13px;border:1px solid #8e8f8f;background:#fff;z-index:5"><div style="position:absolute;left:1px;top:1px;width:9px;height:9px;background:linear-gradient(135deg,#cbcfd5,#f6f6f6);border:1px solid #b8bcc2"></div><svg width="11" height="11" style="position:absolute;left:0;top:0"><path d="M2.5 5.5l2.2 3 4-6.5" fill="none" stroke="#3b5a9c" stroke-width="1.6"/></svg></div>
<div class="a tx" style="left:106.5px;top:237.5px;line-height:14px">Mesh</div>
<div class="a" style="left:107px;top:257px;width:13px;height:13px;border:1px solid #8e8f8f;background:#fff;z-index:5"><div style="position:absolute;left:1px;top:1px;width:9px;height:9px;background:linear-gradient(135deg,#cbcfd5,#f6f6f6);border:1px solid #b8bcc2"></div><svg width="11" height="11" style="position:absolute;left:0;top:0"><path d="M2.5 5.5l2.2 3 4-6.5" fill="none" stroke="#3b5a9c" stroke-width="1.6"/></svg></div>
<div class="a tx" style="left:126.5px;top:256.5px;line-height:14px">hole_mesh</div>
<div class="a" style="left:72px;top:279px;z-index:5;width:0;height:0;border-left:6px solid transparent;border-bottom:6px solid #262626"></div>
<div class="a" style="left:87px;top:276px;width:13px;height:13px;border:1px solid #8e8f8f;background:#fff;z-index:5"><div style="position:absolute;left:1px;top:1px;width:9px;height:9px;background:linear-gradient(135deg,#cbcfd5,#f6f6f6);border:1px solid #b8bcc2"></div><svg width="11" height="11" style="position:absolute;left:0;top:0"><path d="M2.5 5.5l2.2 3 4-6.5" fill="none" stroke="#3b5a9c" stroke-width="1.6"/></svg></div>
<div class="a tx" style="left:106.5px;top:275.5px;line-height:14px">PointCloud</div>
<div class="a" style="left:107px;top:295px;width:13px;height:13px;border:1px solid #8e8f8f;background:#fff;z-index:5"><div style="position:absolute;left:1px;top:1px;width:9px;height:9px;background:linear-gradient(135deg,#cbcfd5,#f6f6f6);border:1px solid #b8bcc2"></div></div>
<div class="a tx" style="left:126.5px;top:294.5px;line-height:14px">hole</div>
<div class="a" style="left:87px;top:314px;width:13px;height:13px;border:1px solid #8e8f8f;background:#fff;z-index:5"><div style="position:absolute;left:1px;top:1px;width:9px;height:9px;background:linear-gradient(135deg,#cbcfd5,#f6f6f6);border:1px solid #b8bcc2"></div><svg width="11" height="11" style="position:absolute;left:0;top:0"><path d="M2.5 5.5l2.2 3 4-6.5" fill="none" stroke="#3b5a9c" stroke-width="1.6"/></svg></div>
<div class="a tx" style="left:106.5px;top:313.5px;line-height:14px">Target</div>
<!-- props panel -->
<div class="a panelt" style="left:43px;top:376px;width:256px"></div>
<div class="a pt" style="left:45px;top:378px">属性</div>
<div class="a white" style="left:43px;top:396px;width:256px;height:208px;border:1px solid #828790"></div>


<!-- props content -->
<div class="a" style="left:44px;top:397px;width:254px;height:24px;background:linear-gradient(180deg,#ffffff 0%,#ffffff 35%,#f1f2f4 40%,#eceef0 100%);z-index:4"></div>
<div class="a" style="left:44px;top:421px;width:250px;height:1px;background:#d5d5d5;z-index:5"></div>
<div class="a" style="left:168px;top:399px;width:1px;height:22px;background:#e4e4e4;z-index:5"></div>
<div class="a" style="left:293px;top:399px;width:1px;height:22px;background:#e4e4e4;z-index:5"></div>
<div class="a tx cj" style="left:93px;top:402px">属性</div>
<div class="a tx cj" style="left:225px;top:402px">值</div>
<div class="a" style="left:44px;top:452px;width:250px;height:1px;background:repeating-linear-gradient(90deg,#c8c8c8 0 2px,#e8e8e8 2px 3px);z-index:5"></div>
<div class="a" style="left:44px;top:482px;width:250px;height:1px;background:repeating-linear-gradient(90deg,#c8c8c8 0 2px,#e8e8e8 2px 3px);z-index:5"></div>
<div class="a" style="left:44px;top:512px;width:250px;height:1px;background:repeating-linear-gradient(90deg,#c8c8c8 0 2px,#e8e8e8 2px 3px);z-index:5"></div>
<div class="a" style="left:44px;top:542px;width:250px;height:1px;background:repeating-linear-gradient(90deg,#c8c8c8 0 2px,#e8e8e8 2px 3px);z-index:5"></div>
<div class="a" style="left:44px;top:572px;width:250px;height:1px;background:repeating-linear-gradient(90deg,#c8c8c8 0 2px,#e8e8e8 2px 3px);z-index:5"></div>
<div class="a" style="left:168px;top:422px;width:1px;height:151px;background:repeating-linear-gradient(180deg,#c8c8c8 0 2px,#e8e8e8 2px 3px);z-index:5"></div>
<div class="a" style="left:293px;top:422px;width:1px;height:151px;background:repeating-linear-gradient(180deg,#c8c8c8 0 2px,#e8e8e8 2px 3px);z-index:5"></div>
<div class="a tx cj" style="left:47px;top:431px">名字</div>
<div class="a tx" style="left:172px;top:431px;line-height:14px">hole</div>
<div class="a tx cj" style="left:47px;top:461px">点数</div>
<div class="a tx" style="left:172px;top:461px;line-height:14px">23700</div>
<div class="a tx cj" style="left:47px;top:491px">顶点颜色</div>
<div class="a tx cj" style="left:47px;top:521px">点大小</div>
<div class="a tx cj" style="left:47px;top:551px">显示</div>
<div class="a tx" style="left:172px;top:551px;line-height:14px">Site1</div>
<div class="a" style="left:170px;top:484px;width:122px;height:27px;border:1px solid #707070;border-radius:3px;background:linear-gradient(180deg,#f2f2f2 0%,#ebebeb 45%,#dddddd 50%,#cfcfcf 100%);z-index:5;box-shadow:inset 0 0 0 1px #fcfcfc"></div>
<div class="a tx cj" style="left:207px;top:491px;z-index:6">设置颜色</div>
<div class="a" style="left:170px;top:513px;width:123px;height:30px;border:1px solid #c5d3e3;background:#fff;z-index:5"></div>
<div class="a tx" style="left:173px;top:521px;line-height:14px;z-index:6">1</div>
<div class="a" style="left:273px;top:515px;width:18px;height:12px;border:1px solid #c2c8d0;background:linear-gradient(180deg,#f6f6f6,#e4e6ea);z-index:6"></div>
<div class="a" style="left:273px;top:527px;width:18px;height:12px;border:1px solid #c2c8d0;background:linear-gradient(180deg,#f6f6f6,#e4e6ea);z-index:6"></div>
<div class="a" style="left:279px;top:519px;width:0;height:0;border-left:3.5px solid transparent;border-right:3.5px solid transparent;border-bottom:3px solid #4a6aa8;z-index:7"></div>
<div class="a" style="left:279px;top:532px;width:0;height:0;border-left:3.5px solid transparent;border-right:3.5px solid transparent;border-top:3px solid #4a6aa8;z-index:7"></div>
<!-- console -->
<div class="a panelt" style="left:43px;top:610px;width:1117px"></div>
<div class="a pt" style="left:45px;top:612px">控制台</div>
<div class="a white" style="left:44px;top:633px;width:1114px;height:71px;border:1px solid #dfe4ea;border-bottom-color:#e3e8ee;overflow:hidden">
<div style="position:absolute;left:4.5px;top:-4.5px"><div class="ln"><span class="m">[GL</span>过滤器<span class="m">]</span>初始化</div><div class="ln"><span class="m">[GL</span>过滤器<span class="m">]</span>初始化</div><div class="ln"><span class="m">[GL</span>过滤器<span class="m">]</span>初始化</div><div class="ln"><span class="m">[GL</span>过滤器<span class="m">]</span>初始化</div><div class="ln"><span class="m">[GL</span>过滤器<span class="m">]</span>初始化</div></div></div>
<div class="a" style="left:1141px;top:634px;width:16px;height:69px;background:#eaeaea;z-index:4"></div>
<div class="a" style="left:1146px;top:641px;width:0;height:0;border-left:3.5px solid transparent;border-right:3.5px solid transparent;border-bottom:4px solid #404040;z-index:5"></div>
<div class="a" style="left:1146px;top:692px;width:0;height:0;border-left:3.5px solid transparent;border-right:3.5px solid transparent;border-top:4px solid #404040;z-index:5"></div>
<div class="a" style="left:1141px;top:669px;width:15px;height:16px;border:1px solid #8a8a8a;border-radius:2px;background:linear-gradient(90deg,#fafafa,#f0f0f0 40%,#c8c8c8);z-index:5"></div>
<div class="a white" style="left:43px;top:704px;width:1117px;height:22px"></div>
<div class="a" style="left:45px;top:708px;z-index:6;white-space:nowrap"><span class="cjm">命令</span><span class="m" style="font-weight:bold">:</span></div>
<div class="a vl" style="left:42px;top:155px;height:572px"></div>
<div class="a hl" style="left:8px;top:727px;width:35px"></div>

<svg class="a" style="left:0;top:0;z-index:10" width="1168" height="758" viewBox="0 0 1168 758">
<defs>
<linearGradient id="sph" x1="0" y1="0" x2="1" y2="1"><stop offset="0" stop-color="#f4f4f4"/><stop offset=".55" stop-color="#8a8a8a"/><stop offset="1" stop-color="#202020"/></linearGradient>
<radialGradient id="bust" cx=".6" cy=".35" r=".7"><stop offset="0" stop-color="#d8d8d8"/><stop offset=".5" stop-color="#707070"/><stop offset="1" stop-color="#202020"/></radialGradient>
<linearGradient id="imgbg" x1="0" y1="0" x2="1" y2="1"><stop offset="0" stop-color="#3a90d0"/><stop offset="1" stop-color="#1060a0"/></linearGradient>
</defs>
<!-- grips row1..3 -->
<g fill="#8c8c8c">
 <rect x="12" y="57" width="2" height="1"/><rect x="12" y="61" width="2" height="1"/><rect x="12" y="65" width="2" height="1"/><rect x="12" y="69" width="2" height="1"/><rect x="12" y="73" width="2" height="1"/><rect x="12" y="77" width="2" height="1"/><rect x="12" y="81" width="2" height="1"/>
 <rect x="210" y="57" width="2" height="1"/><rect x="210" y="61" width="2" height="1"/><rect x="210" y="65" width="2" height="1"/><rect x="210" y="69" width="2" height="1"/><rect x="210" y="73" width="2" height="1"/><rect x="210" y="77" width="2" height="1"/><rect x="210" y="81" width="2" height="1"/>
 <rect x="12" y="91" width="2" height="1"/><rect x="12" y="95" width="2" height="1"/><rect x="12" y="99" width="2" height="1"/><rect x="12" y="103" width="2" height="1"/><rect x="12" y="107" width="2" height="1"/><rect x="12" y="111" width="2" height="1"/><rect x="12" y="115" width="2" height="1"/>
 <rect x="117" y="91" width="2" height="1"/><rect x="117" y="95" width="2" height="1"/><rect x="117" y="99" width="2" height="1"/><rect x="117" y="103" width="2" height="1"/><rect x="117" y="107" width="2" height="1"/><rect x="117" y="111" width="2" height="1"/><rect x="117" y="115" width="2" height="1"/>
 <rect x="191" y="91" width="2" height="1"/><rect x="191" y="95" width="2" height="1"/><rect x="191" y="99" width="2" height="1"/><rect x="191" y="103" width="2" height="1"/><rect x="191" y="107" width="2" height="1"/><rect x="191" y="111" width="2" height="1"/><rect x="191" y="115" width="2" height="1"/>
 <rect x="12" y="125" width="2" height="1"/><rect x="12" y="129" width="2" height="1"/><rect x="12" y="133" width="2" height="1"/><rect x="12" y="137" width="2" height="1"/><rect x="12" y="141" width="2" height="1"/><rect x="12" y="145" width="2" height="1"/><rect x="12" y="149" width="2" height="1"/>
</g>
<!-- toolbar end lines -->
<g fill="#a0a0a0">
 <rect x="205" y="53" width="1" height="33"/><rect x="112" y="87" width="1" height="33"/><rect x="186" y="87" width="1" height="33"/>
</g>
<g fill="#fff"><rect x="206" y="53" width="1" height="33"/><rect x="113" y="87" width="1" height="33"/><rect x="187" y="87" width="1" height="33"/></g>
<!-- separators -->
<g fill="#c2c2c2">
 <rect x="280" y="58" width="1" height="23"/><rect x="410" y="58" width="1" height="23"/><rect x="447" y="58" width="1" height="23"/>
 <rect x="51" y="126" width="1" height="23"/><rect x="182" y="126" width="1" height="23"/><rect x="280" y="126" width="1" height="23"/><rect x="348" y="126" width="1" height="23"/><rect x="416" y="126" width="1" height="23"/><rect x="515" y="126" width="1" height="23"/><rect x="583" y="126" width="1" height="23"/>
</g>
<!-- ROW1 -->
<!-- new -->
<path d="M28.5 64.5h7l2.5 2.5v8.5h-9.5z" fill="#fff" stroke="#1a1a1a" stroke-width="1.2"/>
<!-- open -->
<path d="M57.5 67.5h4l1 1h5v7h-10z" fill="#e8e860" stroke="#202010" stroke-width="1"/>
<path d="M57.5 75.5l3-5h10.5l-3 5z" fill="#a09020" stroke="#202010" stroke-width="1"/>
<path d="M65 67c1-2 3-3 5-2" fill="none" stroke="#202020" stroke-width="1.2"/><path d="M69 63.5l2 1.5-2 1.5z" fill="#202020"/>
<!-- browse -->
<path d="M87.5 63h5l1.5 1.5h8v11h-14.5z" fill="#e8e8e8" stroke="#555" stroke-width="1.6"/>
<path d="M90 75.5l2-7h12" fill="none" stroke="#555" stroke-width="1.6"/>
<circle cx="98.5" cy="74" r="3" fill="#fff" stroke="#2a7ad0" stroke-width="2"/><path d="M100.5 76l3 3.5" stroke="#2a7ad0" stroke-width="2.2"/>
<!-- save -->
<rect x="119" y="63" width="13" height="13" fill="#101010"/><rect x="121" y="64" width="1" height="11" fill="#a09020"/><rect x="129" y="64" width="1" height="11" fill="#a09020"/>
<rect x="122" y="64" width="7" height="5" fill="#fafafa"/><rect x="122" y="69" width="7" height="1" fill="#a09020"/><rect x="127" y="72" width="2" height="3" fill="#f0f0f0"/>
<!-- site -->
<path d="M149.5 64c4 1 8 4 10.5 8.5" fill="none" stroke="#a8a8a8" stroke-width="2.6" stroke-linecap="round"/><path d="M156.5 72.5h5v-5z" fill="#e8e8e8" stroke="#a0a0a0" stroke-width="1"/>
<text x="154" y="81" font-family="Liberation Sans" font-weight="bold" font-style="italic" font-size="8" fill="#2020e0">Site</text>
<!-- gray arrow -->
<path d="M180.5 64c4 1 8 4 10.5 8.5" fill="none" stroke="#a8a8a8" stroke-width="2.6" stroke-linecap="round"/><path d="M187 76.5h6v-6z" fill="#ececec" stroke="#a0a0a0" stroke-width="1"/>
<!-- colored swap -->
<path d="M233 63.5l6.5-0.5 0.5 1.5-3 4.5-4.5 0.5z" fill="#e01010"/>
<path d="M224 73.5l4.5-2 3 2.5 0.5 4-3 2.5-4-1-1.5-3z" fill="#10901a"/>
<path d="M237 70c3 2 3 6-1 8.5l-3.5 0.5" fill="none" stroke="#2030f0" stroke-width="1.6"/><path d="M232 76.5v4.5l3-1z" fill="#2030f0"/>
<!-- A circle -->
<circle cx="262.3" cy="70.8" r="8.2" fill="#f0f000" stroke="#8a7040" stroke-width="1"/>
<path d="M258.5 76l3.5-9.5 3.5 9.5M259.8 72.8h4.5" fill="none" stroke="#5a4a20" stroke-width="1.3"/>
<!-- dotted cloud -->
<g fill="#a8a8a8"><circle cx="294" cy="64" r=".9"/><circle cx="298" cy="62.5" r=".9"/><circle cx="302" cy="64" r=".9"/><circle cx="292" cy="68" r=".9"/><circle cx="296.5" cy="67" r=".9"/><circle cx="300" cy="68" r=".9"/><circle cx="304.5" cy="68" r=".9"/><circle cx="291.5" cy="72" r=".9"/><circle cx="295" cy="72" r=".9"/><circle cx="299" cy="71.5" r=".9"/><circle cx="303.5" cy="72" r=".9"/><circle cx="293" cy="75.5" r=".9"/><circle cx="297" cy="76" r=".9"/><circle cx="301" cy="75.5" r=".9"/><circle cx="305" cy="75" r=".9"/><circle cx="298" cy="78.5" r=".9"/></g>
<!-- cube with points -->
<g fill="none" stroke="#707070" stroke-width="1"><path d="M322 62l6-2.5 10 4v15.5l-6 2.5h-10z"/><path d="M328.5 63.5l9-0.5M322 79.5l6.5-16M332 81l5.5-17.5M328.5 63.5l0 17.5"/></g>
<g fill="#e02020" stroke="#602020" stroke-width=".6"><circle cx="324" cy="62" r="1.6"/><circle cx="328.5" cy="59.6" r="1.6"/><circle cx="328.7" cy="63.5" r="1.6"/><circle cx="337.5" cy="63.6" r="1.6"/><circle cx="322" cy="79.5" r="1.6"/></g>
<!-- G -->
<circle cx="361.3" cy="71" r="8.5" fill="#f0f000" stroke="#c8a030" stroke-width=".8"/>
<text x="356.5" y="75.5" font-family="Liberation Serif" font-size="12" fill="#e02020">G</text>
<!-- red circle -->
<circle cx="392" cy="70" r="8.8" fill="none" stroke="#e01010" stroke-width="2"/>
<g fill="#303030"><circle cx="390" cy="64.5" r=".8"/><circle cx="400.5" cy="61.5" r=".8"/><circle cx="384.5" cy="78" r=".8"/><circle cx="395" cy="76" r=".8"/><circle cx="400" cy="78" r=".8"/></g>
<!-- RSp -->
<text x="417.5" y="77" font-family="Liberation Serif" font-size="17" letter-spacing="-2" fill="#e01818">RS</text>
<text x="436.5" y="77.5" font-family="Liberation Sans" font-size="9" fill="#1a30e0">p</text>
<!-- satellite -->
<ellipse cx="466" cy="66.5" rx="10" ry="3.6" transform="rotate(-22 466 66.5)" fill="#d8d8e8" stroke="#909090" stroke-width="1"/>
<g fill="#b06040" stroke="#505050" stroke-width=".5"><circle cx="462.5" cy="60.5" r="1.4"/><circle cx="457.5" cy="66" r="1.6"/><circle cx="474.5" cy="62.5" r="1.6"/><circle cx="471.5" cy="69.5" r="1.6"/></g>
<circle cx="466" cy="77.5" r="1.3" fill="#909090"/>
<!-- 9 dots -->
<g stroke="#303030" stroke-width=".7">
<circle cx="489.8" cy="62.7" r="2.6" fill="#1010c0"/><circle cx="497" cy="62.7" r="2.6" fill="#e0d000"/><circle cx="504.2" cy="62.7" r="2.6" fill="#e00000"/>
<circle cx="489.8" cy="70.5" r="2.6" fill="#10c010"/><circle cx="497" cy="70.5" r="2.6" fill="#a07840"/><circle cx="504.2" cy="70.5" r="2.6" fill="#10e0f0"/>
<circle cx="489.8" cy="78.3" r="2.6" fill="#c02060"/><circle cx="497" cy="78.3" r="2.6" fill="#f4f4f4"/><circle cx="504.2" cy="78.3" r="2.6" fill="#408040"/>
</g>
<!-- 1C2 -->
<circle cx="528.2" cy="70.8" r="8.5" fill="#f0f000"/>
<text x="523" y="77" font-family="Liberation Serif" font-style="italic" font-size="13" fill="#e02020">C</text>
<text x="520" y="73" font-family="Liberation Serif" font-style="italic" font-size="7" fill="#6030a0">1</text>
<text x="532" y="77" font-family="Liberation Serif" font-style="italic" font-size="7" fill="#6030a0">2</text>
</svg>

<svg class="a" style="left:0;top:0;z-index:10" width="1168" height="758" viewBox="0 0 1168 758">
<!-- ROW2 -->
<!-- geodesic -->
<path d="M28 93l9 0 6 5.5 2 8-4 6-8 2-8-2.5-4-6 1.5-7z" fill="#8c8c70" stroke="#3a3a30" stroke-width="1"/>
<path d="M28 93l-5.5 4.5M37 93l-3 5 9 .5M34 98l-6 5.5 10 2 5 1M28 103.5l-5-4M28 103.5l-2 8M38 105.5l3 7M38 105.5l-5 9" fill="none" stroke="#606050" stroke-width=".7"/>
<path d="M28 103.5l5.5-6 3 5.5z" fill="#f4f4f4"/>
<!-- grid -->
<rect x="54.5" y="95" width="18.5" height="18" rx="2" fill="#2a3040"/>
<g fill="#e8ecf8"><circle cx="58.7" cy="98.8" r="1.6"/><circle cx="63.8" cy="98.8" r="1.6"/><circle cx="69" cy="98.8" r="1.6"/><circle cx="58.7" cy="104" r="1.6"/><circle cx="63.8" cy="104" r="1.6"/><circle cx="69" cy="104" r="1.6"/><circle cx="58.7" cy="109.6" r="1.6"/><circle cx="63.8" cy="109.6" r="1.6"/><circle cx="69" cy="109.6" r="1.6"/></g>
<!-- image -->
<rect x="87" y="97" width="15" height="15" fill="#2a80c8"/>
<path d="M87 100l9 8.5 3-2.5 3 3v2.5h-15z" fill="#101818"/>
<rect x="87" y="110.5" width="15" height="1.5" fill="#30c0f0"/>
<text x="94" y="104" font-family="Liberation Sans" font-size="7" fill="#8040e0">m</text><text x="99.5" y="101" font-family="Liberation Sans" font-size="5" fill="#8040e0">3</text>
<!-- xyz -->
<text x="127.5" y="101" font-family="Liberation Sans" font-weight="bold" font-size="9" fill="#2020f0">Z</text>
<text x="137" y="101.5" font-family="Liberation Sans" font-size="9" fill="#20b030">y</text>
<rect x="128.3" y="101.5" width="2.6" height="12.5" fill="#2020f0"/>
<rect x="128.3" y="112" width="12" height="2.5" fill="#e02020"/>
<path d="M130.5 112.5l9-9" stroke="#20a020" stroke-width="1.6"/>
<path d="M141.5 106.5l6 8M147.5 106.5l-6 8" stroke="#e03030" stroke-width="1.3"/>
<!-- ruler arrow -->
<path d="M159.5 97.8h9.5" stroke="#101010" stroke-width="1.6"/><path d="M159.5 95.5v4.6" stroke="#101010" stroke-width="1.2"/><path d="M168 95l4 2.8-4 2.8z" fill="#101010"/>
<circle cx="175.5" cy="97.8" r="2.8" fill="#e01010"/>
<rect x="159.5" y="104.5" width="18.5" height="5.5" fill="#d8e860"/><rect x="159.5" y="104.5" width="18.5" height="1" fill="#f0f0a0"/>
<rect x="159.5" y="111.5" width="18.5" height="1.2" fill="#101010"/>
<!-- sphere -->
<circle cx="212.5" cy="104.5" r="6.5" fill="url(#sph)"/>
<!-- ROW3 -->
<g fill="none" stroke="#404040" stroke-width="1" stroke-dasharray="1.5 1">
 <rect x="26.5" y="130.5" width="10" height="9"/>
 <rect x="63.5" y="133.5" width="13" height="9"/>
 <path d="M98.5 131.3 L101.3 134.2 L105.7 132.1 L105.0 136.5 L108.8 140.3 L103.6 140.3 L98.5 145.5 L98.5 141.2 L94.2 140.3 L98.0 136.5Z"/>
 <path d="M128 141c-4-2-3-7 3-7.5 5-.5 8 2 7 5-1 2-3 3-6 2"/>
 <path d="M158 143l10-10" stroke="#909090"/>
</g>
<path d="M31.5 132v11l2.5-2.5 2 4 1.5-.8-2-4h3.5z" fill="#fff" stroke="#202020" stroke-width="1"/>
<circle cx="158" cy="143" r="1.5" fill="#a0a0a0"/><circle cx="168" cy="133" r="1.5" fill="#a0a0a0"/>
<g stroke="#505050" stroke-width=".9" stroke-dasharray="1.5 1">
 <path d="M197.5 131.3 L200.3 134.2 L204.7 132.1 L204.0 136.5 L207.8 140.3 L202.6 140.3 L197.5 145.5 L197.5 141.2 L193.2 140.3 L197.0 136.5Z" fill="#b8b8b8"/>
 <path d="M227.5 131.3 L230.3 134.2 L234.7 132.1 L234.0 136.5 L237.8 140.3 L232.6 140.3 L227.5 145.5 L227.5 141.2 L223.2 140.3 L227.0 136.5Z" fill="#d4d4d4"/>
 <path d="M258.5 131.3 L261.3 134.2 L265.7 132.1 L265.0 136.5 L268.8 140.3 L263.6 140.3 L258.5 145.5 L258.5 141.2 L254.2 140.3 L258.0 136.5Z" fill="none"/>
</g>
<path d="M296.5 131.3 L299.3 134.2 L303.7 132.1 L303.0 136.5 L306.8 140.3 L301.6 140.3 L296.5 145.5 L296.5 141.2 L292.2 140.3 L296.0 136.5Z" fill="#787878" stroke="#505050" stroke-width=".8"/>
<rect x="322" y="129.5" width="15" height="15.5" fill="#7a7a7a"/>
<path d="M327.1 131.7 L329.3 134.1 L332.9 132.4 L332.3 135.9 L335.3 138.9 L331.2 138.9 L327.1 143.1 L327.1 139.7 L323.7 138.9 L326.7 135.9Z" fill="#fff"/>
<g fill="none" stroke="#b0b0b0" stroke-width="1">
 <path d="M362 135.5h11v8h-11zM362 144.5h11M365 135.5v-3h5v3M364 138l3 4 3-4M367.5 131.5v-1"/>
 <path d="M391.5 135.5h11v8h-11zM391.5 144.5h11M394.5 135.5v-3h5v3M393.5 138l3 4 3-4M397 131.5v-1"/>
</g>
<rect x="427" y="130" width="15.5" height="15" fill="#10c010"/>
<path d="M432.3 131.3 L434.7 133.7 L438.4 131.9 L437.9 135.7 L441.1 138.9 L436.7 138.9 L432.3 143.3 L432.3 139.7 L428.7 138.9 L431.9 135.7Z" fill="#fff" stroke="#202020" stroke-width=".5"/>
<path d="M462.5 130.8 L465.3 133.7 L469.7 131.6 L469.0 136.0 L472.8 139.8 L467.6 139.8 L462.5 145.0 L462.5 140.7 L458.2 139.8 L462.0 136.0Z" fill="#10c010" stroke="#202020" stroke-width="1"/>
<rect x="489" y="130" width="15.5" height="15" fill="#10c010"/>
<path d="M494.3 131.3 L496.7 133.7 L500.4 131.9 L499.9 135.7 L503.1 138.9 L498.7 138.9 L494.3 143.3 L494.3 139.7 L490.7 138.9 L493.9 135.7Z" fill="none" stroke="#204020" stroke-width=".8" stroke-dasharray="1 1"/>
<path d="M526 131h15l-4 5.5v4.5h-7.5l-3.5 4z" fill="#080808"/>
<path d="M530.5 136.5h6l-6 3.5z" fill="#fff"/>
<!-- trash -->
<path d="M560 131.5h10M561 133.5h8l-.5 10h-7z" fill="#b8b8b8" stroke="#202020" stroke-width="1.3"/>
<path d="M563.5 131v-.5h3v.5" stroke="#202020" fill="none"/>
<path d="M565 135.5v6" stroke="#e0e0e0" stroke-width="1.4"/>
<!-- busts -->
<path d="M595 144.5c1-3 2.5-5 4-7-.5-4 2-7 5-7 3.5 0 5 3 5 6 0 3-1.5 5-3 6.5l-.5 1.5z" fill="url(#bust)"/>
<path d="M626 144.5c1-3 2.5-5 4-7-.5-4 2-7 5-7 3.5 0 5 3 5 6 0 3-1.5 5-3 6.5l-.5 1.5z" fill="url(#bust)"/>
<path d="M627.5 136l8 8M635.5 136l-8 8" stroke="#e01010" stroke-width="1.8"/>
<path d="M658 132.5l11 11M669 132.5l-11 11" stroke="#e81010" stroke-width="2.6"/>
</svg>

<svg class="a" style="left:0;top:0;z-index:10" width="1168" height="758" viewBox="0 0 1168 758">
<defs>
<linearGradient id="btn" x1="0" y1="0" x2="0" y2="1"><stop offset="0" stop-color="#e4e4e4"/><stop offset="1" stop-color="#f0f0f0"/></linearGradient>
<linearGradient id="cube" x1="0" y1="0" x2="0" y2="1"><stop offset="0" stop-color="#f4f0e0"/><stop offset="1" stop-color="#ffffff"/></linearGradient>
</defs>
<!-- horizontal grip -->
<g fill="#8c8c8c"><rect x="12" y="159" width="2" height="2"/><rect x="16" y="159" width="2" height="2"/><rect x="20" y="159" width="2" height="2"/><rect x="24" y="159" width="2" height="2"/><rect x="28" y="159" width="2" height="2"/><rect x="32" y="159" width="2" height="2"/><rect x="36" y="159" width="2" height="2"/></g>
<!-- eye button -->
<rect x="10.5" y="166.5" width="30" height="27" rx="3" fill="url(#btn)" stroke="#5a5a5a" stroke-width="1"/>
<path d="M17.5 180.5c4-4 12-5 17-2-4 5-12 6-17 2z" fill="none" stroke="#8a8a9a" stroke-width=".8"/>
<path d="M19 179.5l4-2.5h6l1 3-1 4-5 .8-4.5-1.5z" fill="#e85010"/>
<g fill="#f02020"><circle cx="20.5" cy="181" r=".8"/><circle cx="27.5" cy="183" r=".8"/><circle cx="22.5" cy="183.5" r=".7"/><circle cx="28.5" cy="178.5" r=".8"/></g><g fill="#f0d020"><circle cx="21" cy="179" r=".6"/><circle cx="25" cy="184" r=".6"/><circle cx="29" cy="181" r=".6"/></g>
<circle cx="25" cy="180.3" r="2.4" fill="#080808"/><circle cx="26.8" cy="178.3" r="1.4" fill="#fff"/><path d="M24 176.5q2-1 3.5 0" stroke="#20c020" stroke-width="1" fill="none"/>
<!-- curve -->
<path d="M17 213c6 2 13 1 18-4" fill="none" stroke="#606060" stroke-width="1.3"/>
<!-- check button -->
<rect x="10.5" y="226.5" width="30" height="27" rx="3" fill="url(#btn)" stroke="#5a5a5a" stroke-width="1"/>
<path d="M26 231v20M16 241h20" stroke="#404040" stroke-width="1.6"/>
<path d="M18.5 240.5l5 5 11-9" fill="none" stroke="#10b010" stroke-width="2.8"/>
<!-- red asterisk -->
<path d="M25 260v20M15 270h20" stroke="#404040" stroke-width="1.6"/>
<path d="M19 264l12 12M31 264l-12 12M18 270h14M25 263v14" stroke="#e01010" stroke-width="2.2"/>
<!-- zoom A -->
<circle cx="23.5" cy="297.5" r="5.3" fill="#fff" stroke="#2a78c8" stroke-width="2.2"/>
<path d="M27.5 301.5l6 6" stroke="#2a78c8" stroke-width="3" stroke-linecap="round"/>
<path d="M21 300.5l2.5-6 2.5 6M22 298.5h3" fill="none" stroke="#303030" stroke-width="1"/>
<!-- zoom -->
<circle cx="23.5" cy="327" r="5.3" fill="#fff" stroke="#2a78c8" stroke-width="2.2"/>
<path d="M27.5 331l6 6" stroke="#2a78c8" stroke-width="3" stroke-linecap="round"/>
<!-- axes -->
<path d="M24.5 353.5v9" stroke="#1a30e0" stroke-width="1.6"/><path d="M22.5 356l2-4 2 4z" fill="#1a30e0"/>
<path d="M24.5 362.5l-6 4.5" stroke="#10b010" stroke-width="1.6"/><path d="M24.5 362.5l6 4.5" stroke="#e01010" stroke-width="1.6"/>
<circle cx="24.5" cy="362.5" r="1.6" fill="#c0c020"/>
<!-- cubes -->
<g id="cb1" stroke="#101010" stroke-width="1.3" fill="none">
</g>
<path d="M17.5 387.5L22.0 383.5H32.0V393.0L27.5 397.0H17.5Z" fill="#fbf8ec"/><path d="M17.5 387.5L22.0 383.5H32.0L27.5 387.5Z" fill="#10e0e8"/><path d="M22.0 383.5V393.0H32.0M22.0 393.0L17.5 397.0" fill="none" stroke="#606060" stroke-width=".8"/><path d="M17.5 387.5L22.0 383.5H32.0V393.0L27.5 397.0H17.5ZM17.5 387.5H27.5V397.0M27.5 387.5L32.0 383.5" fill="none" stroke="#101010" stroke-width="1.3"/><path d="M17.5 417.5L22.0 413.5H32.0V423.0L27.5 427.0H17.5Z" fill="#fbf8ec"/><path d="M17.5 427.0L22.0 423.0H32.0L27.5 427.0Z" fill="#10e0e8"/><path d="M22.0 413.5V423.0H32.0M22.0 423.0L17.5 427.0" fill="none" stroke="#606060" stroke-width=".8"/><path d="M17.5 417.5L22.0 413.5H32.0V423.0L27.5 427.0H17.5ZM17.5 417.5H27.5V427.0M27.5 417.5L32.0 413.5" fill="none" stroke="#101010" stroke-width="1.3"/><path d="M17.5 447.5L22.0 443.5H32.0V453.0L27.5 457.0H17.5Z" fill="#fbf8ec"/><path d="M17.5 447.5H27.5V457.0H17.5Z" fill="#10e0e8"/><path d="M22.0 443.5V453.0H32.0M22.0 453.0L17.5 457.0" fill="none" stroke="#606060" stroke-width=".8"/><path d="M17.5 447.5L22.0 443.5H32.0V453.0L27.5 457.0H17.5ZM17.5 447.5H27.5V457.0M27.5 447.5L32.0 443.5" fill="none" stroke="#101010" stroke-width="1.3"/><path d="M17.5 477.5L22.0 473.5H32.0V483.0L27.5 487.0H17.5Z" fill="#fbf8ec"/><path d="M22.0 473.5H32.0V483.0H22.0Z" fill="#10e0e8"/><path d="M22.0 473.5V483.0H32.0M22.0 483.0L17.5 487.0" fill="none" stroke="#606060" stroke-width=".8"/><path d="M17.5 477.5L22.0 473.5H32.0V483.0L27.5 487.0H17.5ZM17.5 477.5H27.5V487.0M27.5 477.5L32.0 473.5" fill="none" stroke="#101010" stroke-width="1.3"/><path d="M17.5 507.5L22.0 503.5H32.0V513.0L27.5 517.0H17.5Z" fill="#fbf8ec"/><path d="M17.5 507.5L22.0 503.5V513.0L17.5 517.0Z" fill="#10e0e8"/><path d="M22.0 503.5V513.0H32.0M22.0 513.0L17.5 517.0" fill="none" stroke="#606060" stroke-width=".8"/><path d="M17.5 507.5L22.0 503.5H32.0V513.0L27.5 517.0H17.5ZM17.5 507.5H27.5V517.0M27.5 507.5L32.0 503.5" fill="none" stroke="#101010" stroke-width="1.3"/><path d="M17.5 537.5L22.0 533.5H32.0V543.0L27.5 547.0H17.5Z" fill="#fbf8ec"/><path d="M27.5 537.5L32.0 533.5V543.0L27.5 547.0Z" fill="#10e0e8"/><path d="M22.0 533.5V543.0H32.0M22.0 543.0L17.5 547.0" fill="none" stroke="#606060" stroke-width=".8"/><path d="M17.5 537.5L22.0 533.5H32.0V543.0L27.5 547.0H17.5ZM17.5 537.5H27.5V547.0M27.5 537.5L32.0 533.5" fill="none" stroke="#101010" stroke-width="1.3"/></svg>

<svg class="a" style="left:0;top:0;z-index:10" width="1168" height="758" viewBox="0 0 1168 758">
<defs>
<linearGradient id="capb" x1="0" y1="0" x2="0" y2="1"><stop offset="0" stop-color="#e4ecf6"/><stop offset=".45" stop-color="#bfd0e6"/><stop offset=".5" stop-color="#98aecb"/><stop offset="1" stop-color="#b8cce4"/></linearGradient>
<linearGradient id="capx" x1="0" y1="0" x2="0" y2="1"><stop offset="0" stop-color="#eab0a0"/><stop offset=".45" stop-color="#d87a62"/><stop offset=".5" stop-color="#c83a1c"/><stop offset="1" stop-color="#e2765a"/></linearGradient>
<linearGradient id="mdib" x1="0" y1="0" x2="0" y2="1"><stop offset="0" stop-color="#f2f6fb"/><stop offset="1" stop-color="#dde6f2"/></linearGradient>
</defs>
<!-- caption buttons -->
<path d="M1058.5 0.5v13a6 6 0 0 0 6 6h22v-19.5z" fill="url(#capb)" stroke="#3c4a5c" stroke-width="1"/>
<rect x="1086.5" y="0.5" width="27" height="19" fill="url(#capb)" stroke="#3c4a5c" stroke-width="1"/>
<path d="M1113.5 0.5h46v13a6 6 0 0 1 -6 6h-40z" fill="url(#capx)" stroke="#3c2a2a" stroke-width="1"/>
<rect x="1068" y="11" width="11" height="3.5" rx="1" fill="#fff" stroke="#3a4a60" stroke-width="1"/>
<rect x="1094.5" y="5.5" width="10" height="8" fill="none" stroke="#3a4a60" stroke-width="1"/><rect x="1095.5" y="6.5" width="8" height="6" fill="none" stroke="#fff" stroke-width="1.2"/><rect x="1097.5" y="8.5" width="4" height="2" fill="#7a92b0"/>
<path d="M1131.5 5l10 9M1141.5 5l-10 9" stroke="#3a3a3a" stroke-width="4"/>
<path d="M1131.5 5l10 9M1141.5 5l-10 9" stroke="#fff" stroke-width="2.4"/>
<!-- app icon -->
<g transform="translate(-0.8 -24.8)">
<g fill="none" stroke="#1f74c4" stroke-width="2">
<path d="M10.8 37.5Q16.2 30.8 21.8 37.5"/><path d="M9.8 41.3Q16.2 33.8 22.8 41.3"/><path d="M9.5 48.5V45.3Q16.2 37.5 23 45.3V48.5"/>
</g>
<ellipse cx="16.2" cy="46.3" rx="4.2" ry="2" fill="#30c030"/>
</g><g transform="translate(0 0)">
<g fill="none" stroke="#1f74c4" stroke-width="2">
<path d="M10.8 37.5Q16.2 30.8 21.8 37.5"/><path d="M9.8 41.3Q16.2 33.8 22.8 41.3"/><path d="M9.5 48.5V45.3Q16.2 37.5 23 45.3V48.5"/>
</g>
<ellipse cx="16.2" cy="46.3" rx="4.2" ry="2" fill="#30c030"/>
</g>
<!-- MDI buttons -->
<rect x="1106.5" y="31.5" width="16" height="17" fill="url(#mdib)" stroke="#9aaec6" stroke-width="1" stroke-dasharray="1 .5"/>
<rect x="1124.5" y="31.5" width="16" height="17" fill="url(#mdib)" stroke="#9aaec6" stroke-width="1" stroke-dasharray="1 .5"/>
<rect x="1142.5" y="31.5" width="16" height="17" fill="url(#mdib)" stroke="#9aaec6" stroke-width="1" stroke-dasharray="1 .5"/>
<rect x="1111" y="42" width="6" height="2" fill="#6a6a6a"/>
<path d="M1129.5 38.5h6v5h-6zM1131.5 38.5v-2h6v5h-2" fill="none" stroke="#6a6a6a" stroke-width="1.2"/>
<path d="M1147.5 37l6 6.5M1153.5 37l-6 6.5" stroke="#707070" stroke-width="1.8"/>
<!-- dock float/close icons -->
<g id="dk">
<path d="M271.5 164.5h5v4h-5zM273.5 164.5v-2h5v4h-2" fill="none" stroke="#000" stroke-width="1.3"/>
<path d="M286 162.5l7 6.5M293 162.5l-7 6.5" stroke="#000" stroke-width="1.5"/>
</g>
<path d="M271.5 384.5h5v4h-5zM273.5 384.5v-2h5v4h-2" fill="none" stroke="#000" stroke-width="1.3"/>
<path d="M286 382.5l7 6.5M293 382.5l-7 6.5" stroke="#000" stroke-width="1.5"/>
<path d="M1132.5 618.5h5v4h-5zM1134.5 618.5v-2h5v4h-2" fill="none" stroke="#000" stroke-width="1.3"/>
<path d="M1147.5 615.5l7 6.5M1154.5 615.5l-7 6.5" stroke="#000" stroke-width="1.5"/>
<!-- size grip -->
<g fill="#9a9a9a"><rect x="1155" y="740" width="2" height="2"/><rect x="1155" y="744" width="2" height="2"/><rect x="1151" y="744" width="2" height="2"/><rect x="1155" y="748" width="2" height="1"/></g>
</svg>
</body></html>
